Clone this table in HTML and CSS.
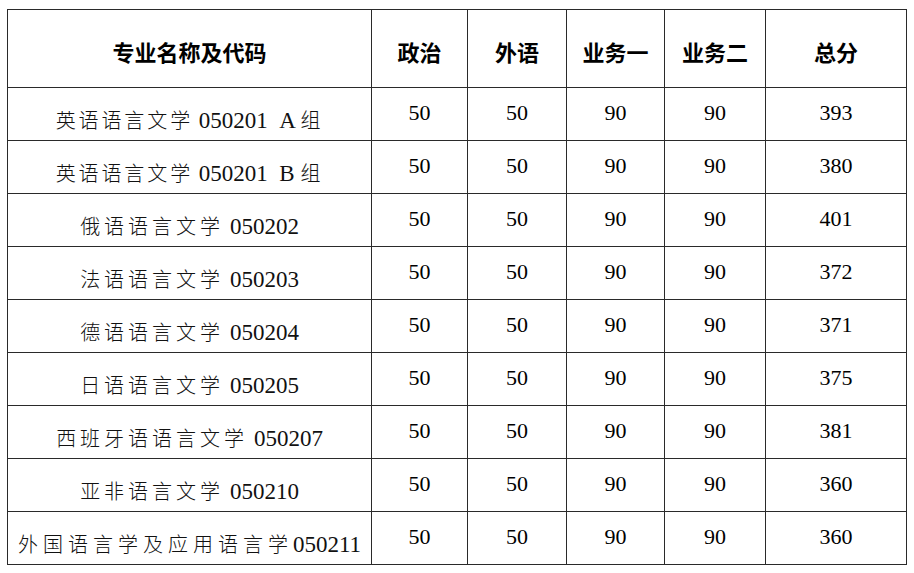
FILE: index.html
```html
<!DOCTYPE html>
<html lang="zh">
<head>
<meta charset="utf-8">
<title>分数线</title>
<link rel="stylesheet" href="styles.css">
</head>
<body>
<table class="score-table">
  <colgroup>
    <col class="c-name"><col class="c-zz"><col class="c-wy"><col class="c-y1"><col class="c-y2"><col class="c-total">
  </colgroup>
  <thead>
    <tr>
      <th>专业名称及代码</th><th>政治</th><th>外语</th><th>业务一</th><th>业务二</th><th>总分</th>
    </tr>
  </thead>
  <tbody>
    <tr><td class="name tight"><span class="zh">英语语言文学</span> 050201 &nbsp;A <span class="zh">组</span></td><td>50</td><td>50</td><td>90</td><td>90</td><td>393</td></tr>
    <tr><td class="name tight"><span class="zh">英语语言文学</span> 050201 &nbsp;B <span class="zh">组</span></td><td>50</td><td>50</td><td>90</td><td>90</td><td>380</td></tr>
    <tr><td class="name"><span class="zh">俄语语言文学</span> 050202</td><td>50</td><td>50</td><td>90</td><td>90</td><td>401</td></tr>
    <tr><td class="name"><span class="zh">法语语言文学</span> 050203</td><td>50</td><td>50</td><td>90</td><td>90</td><td>372</td></tr>
    <tr><td class="name"><span class="zh">德语语言文学</span> 050204</td><td>50</td><td>50</td><td>90</td><td>90</td><td>371</td></tr>
    <tr><td class="name"><span class="zh">日语语言文学</span> 050205</td><td>50</td><td>50</td><td>90</td><td>90</td><td>375</td></tr>
    <tr><td class="name"><span class="zh">西班牙语语言文学</span> 050207</td><td>50</td><td>50</td><td>90</td><td>90</td><td>381</td></tr>
    <tr><td class="name"><span class="zh">亚非语言文学</span> 050210</td><td>50</td><td>50</td><td>90</td><td>90</td><td>360</td></tr>
    <tr><td class="name wide"><span class="zh">外国语言学及应用语言学</span>050211</td><td>50</td><td>50</td><td>90</td><td>90</td><td>360</td></tr>
  </tbody>
</table>
</body>
</html>
```
FILE: styles.css
```css
html, body {
  margin: 0;
  padding: 0;
  background: #ffffff;
}
body {
  padding: 9px 0 0 7px;
  font-family: "Liberation Serif", "Noto Sans CJK SC", serif;
  color: #000;
}
.score-table {
  border-collapse: collapse;
  table-layout: fixed;
  width: 899px;
}
.c-name { width: 364px; }
.c-zz { width: 96px; }
.c-wy { width: 99px; }
.c-y1 { width: 98px; }
.c-y2 { width: 101px; }
.c-total { width: 141px; }

.score-table thead tr {
  height: 78px;
}
.score-table tbody tr {
  height: 53px;
}
.score-table th,
.score-table td {
  border: 1px solid #2a2a2a;
  padding: 0;
  text-align: center;
  vertical-align: top;
}
.score-table th {
  padding-top: 29px;
  font-family: "Liberation Serif", "Noto Sans CJK SC", serif;
  font-size: 22px;
  font-weight: 700;
  line-height: 30px;
}
.score-table td {
  padding-top: 11px;
  font-size: 22px;
  line-height: 28px;
}
.score-table td.name {
  padding-top: 18px;
  font-size: 23px;
  line-height: 28px;
  color: #111;
  white-space: nowrap;
}
.name .zh {
  font-family: "Noto Sans CJK SC", sans-serif;
  font-size: 20px;
  font-weight: 300;
  letter-spacing: 4px;
}
.name.tight .zh {
  letter-spacing: 2.9px;
}
.name.wide .zh {
  letter-spacing: 5px;
}
```
